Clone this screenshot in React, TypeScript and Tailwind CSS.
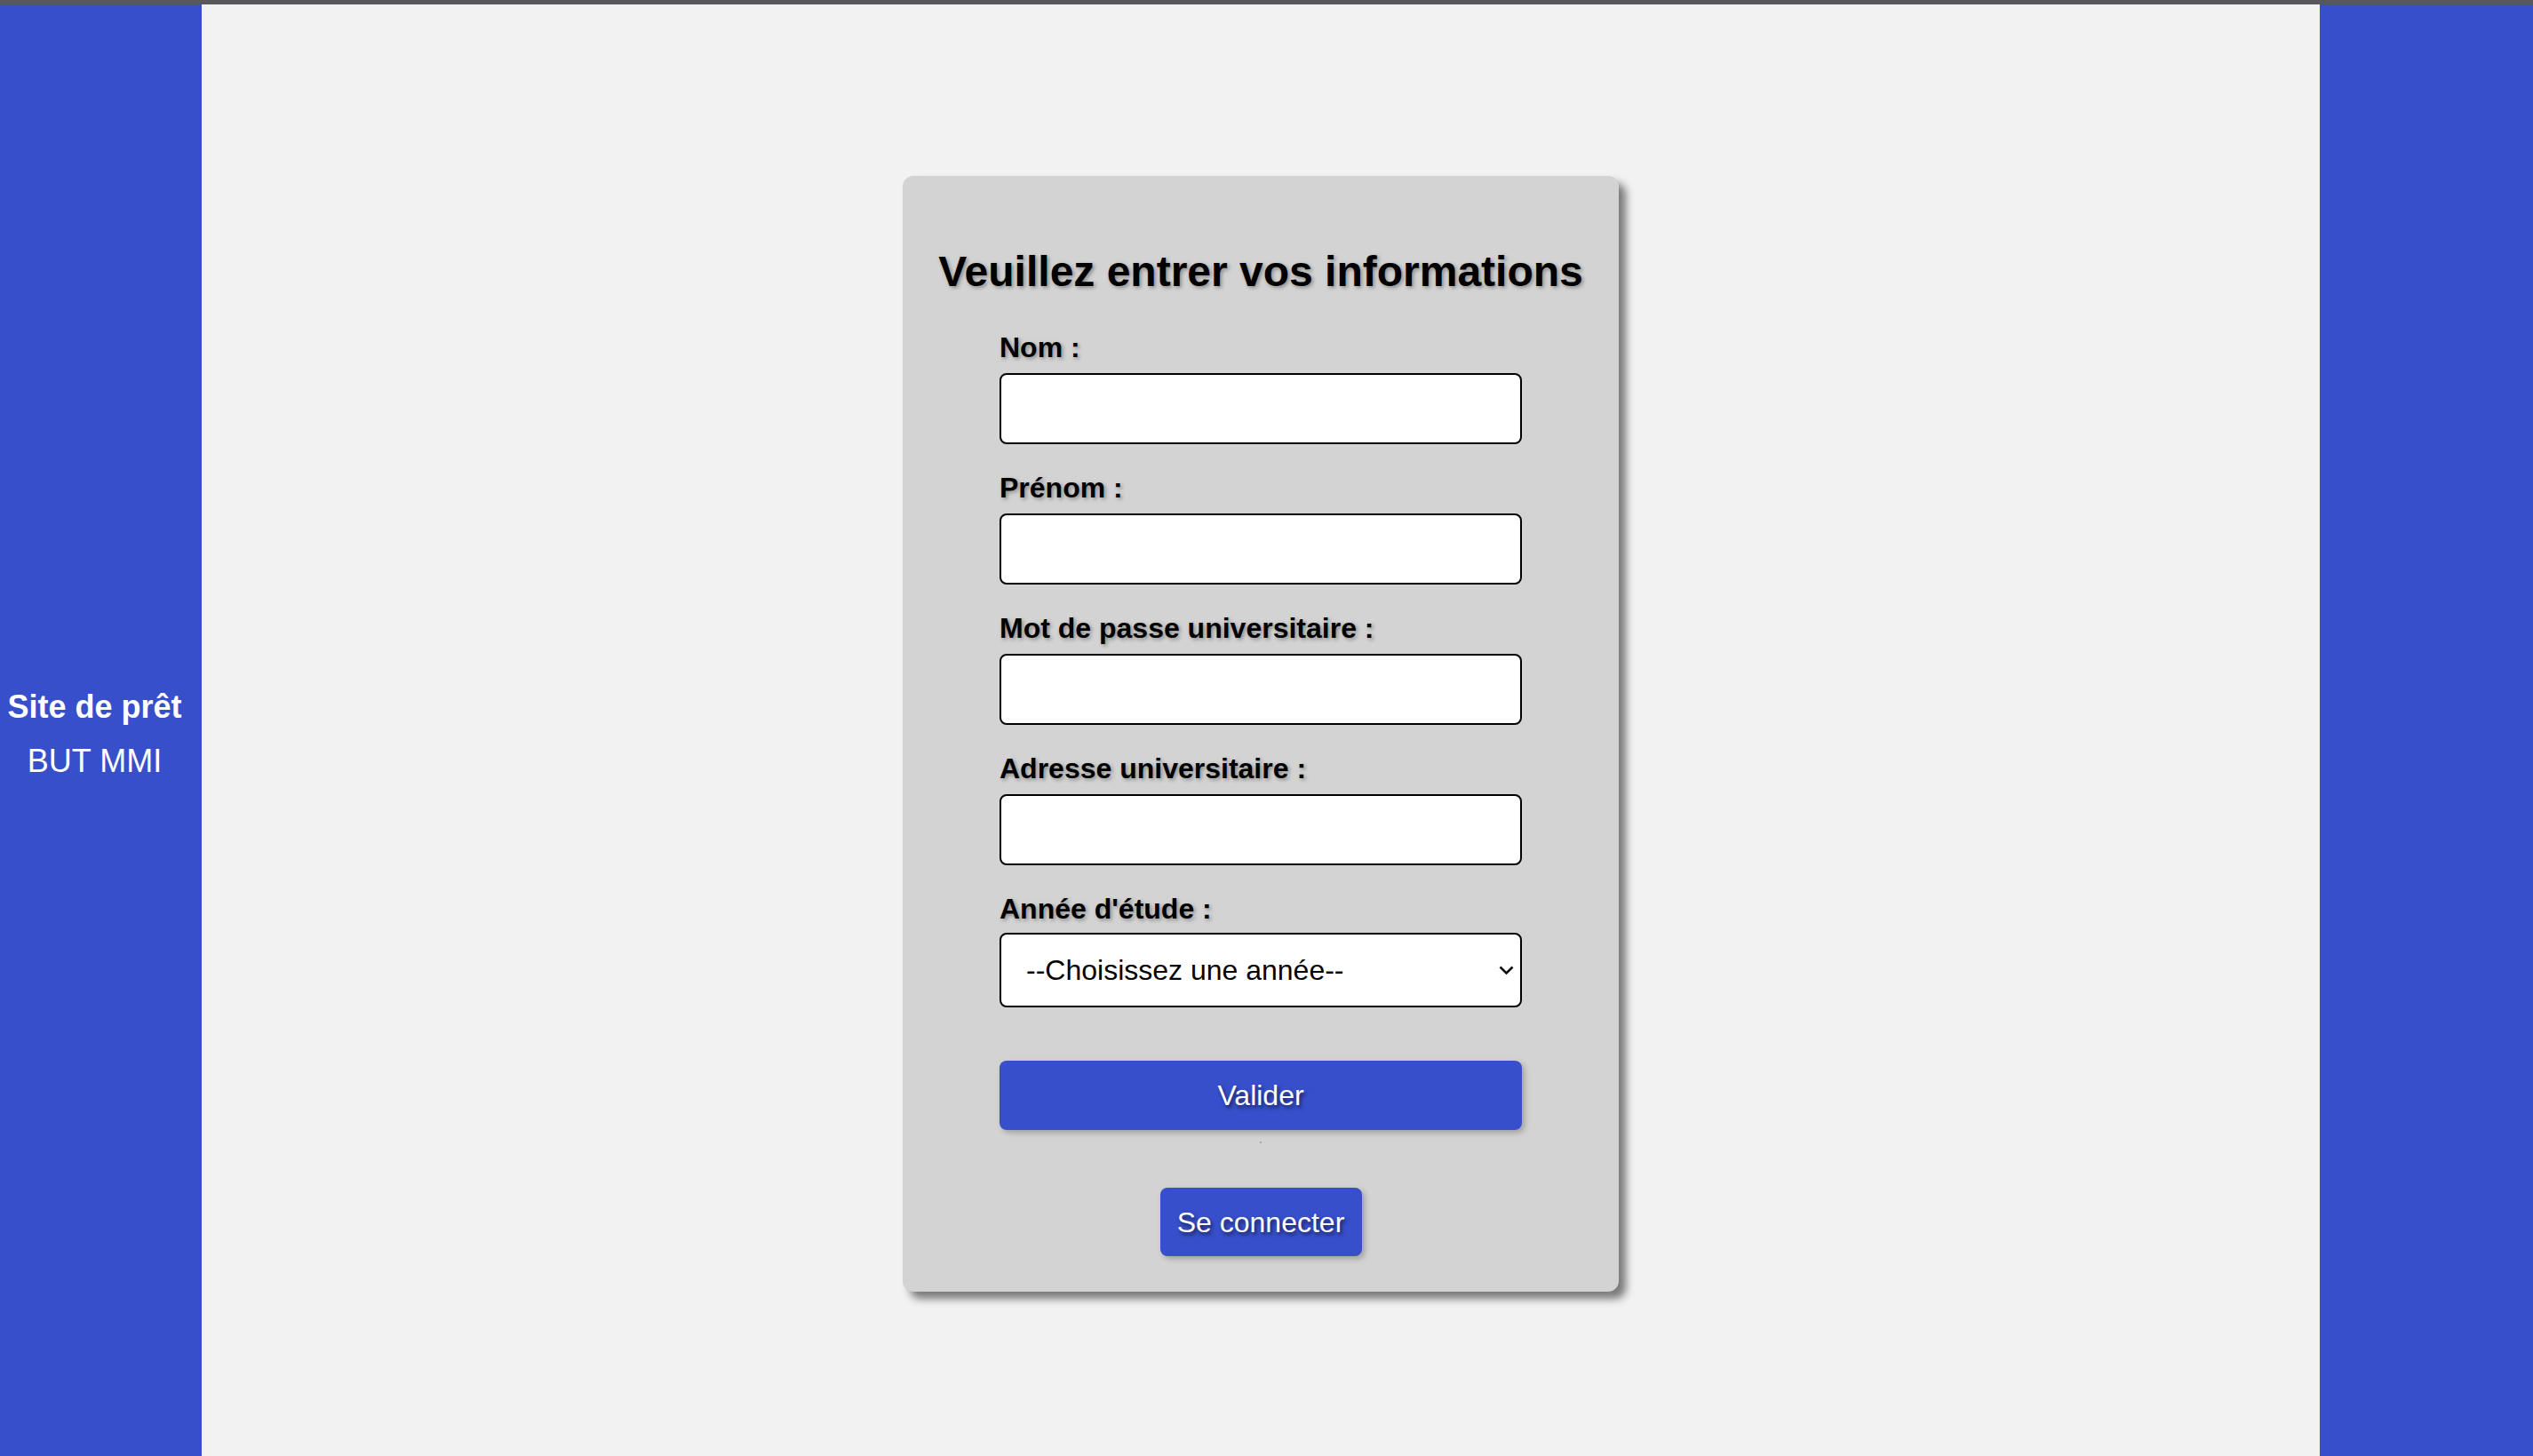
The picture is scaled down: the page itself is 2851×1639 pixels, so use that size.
import React from 'react';

const fields = [
    { id: 'nom', label: 'Nom :', type: 'text' },
    { id: 'prenom', label: 'Prénom :', type: 'text' },
    { id: 'mdp', label: 'Mot de passe universitaire :', type: 'password' },
    { id: 'adresse', label: 'Adresse universitaire :', type: 'email' },
];

export default function App() {
    return (
        <div className="flex h-screen flex-col overflow-hidden font-['Liberation_Sans',Arial,sans-serif]">
            <div className="h-[5px] w-full bg-[#58585c]" />
            <div className="flex flex-1">
                {/* barre gauche */}
                <aside className="flex w-[227px] shrink-0 flex-col items-center justify-center bg-[#384fcc] pr-[14px] pt-[8px] text-white">
                    <p className="text-[36px] font-bold leading-[41px]">Site de prêt</p>
                    <p className="mt-[20px] text-[36px] leading-[41px]">BUT MMI</p>
                </aside>

                <main className="flex flex-1 justify-center bg-[#f2f2f2] pt-[193px]">
                    <div className="h-fit w-[806px] rounded-[12px] bg-[#d3d3d3] px-[109px] pb-[40px] pt-[80px] shadow-[8px_8px_10px_rgba(0,0,0,0.5)]">
                        <h2 className="-mx-[109px] whitespace-nowrap text-center text-[48px] font-bold leading-[55px] text-black [text-shadow:2px_2px_4px_#8a8a8a]">
                            Veuillez entrer vos informations
                        </h2>

                        <form className="mt-[40px]" onSubmit={(e) => e.preventDefault()}>
                            {fields.map((f) => (
                                <div key={f.id} className="mb-[31px]">
                                    <label
                                        htmlFor={f.id}
                                        className="block text-[32px] font-bold leading-[37px] text-black [text-shadow:2px_2px_4px_#8a8a8a]"
                                    >
                                        {f.label}
                                    </label>
                                    <input
                                        id={f.id}
                                        type={f.type}
                                        className="mt-[10px] block h-[80px] w-full rounded-[8px] border-2 border-black bg-white px-[20px] text-[32px] outline-none"
                                    />
                                </div>
                            ))}

                            <label
                                htmlFor="annee"
                                className="block text-[32px] font-bold leading-[37px] text-black [text-shadow:2px_2px_4px_#8a8a8a]"
                            >
                                Année d'étude :
                            </label>
                            <div className="relative mt-[8px]">
                                <select
                                    id="annee"
                                    defaultValue=""
                                    className="block h-[84px] w-full appearance-none rounded-[8px] border-2 border-black bg-white pl-[28px] text-[32px] text-black outline-none"
                                >
                                    <option value="">--Choisissez une année--</option>
                                    <option value="1">BUT 1</option>
                                    <option value="2">BUT 2</option>
                                    <option value="3">BUT 3</option>
                                </select>
                                <svg
                                    className="pointer-events-none absolute right-[9px] top-[37px] h-[11px] w-[17px]"
                                    viewBox="0 0 17 11"
                                    fill="none"
                                    stroke="#111"
                                    strokeWidth="2.6"
                                >
                                    <path d="M1.5 1.5 L8.5 8.5 L15.5 1.5" />
                                </svg>
                            </div>

                            <button
                                type="submit"
                                className="mt-[60px] block h-[78px] w-full rounded-[8px] bg-[#384fcc] text-[32px] text-white shadow-[3px_3px_6px_rgba(0,0,0,0.25)] [text-shadow:2px_3px_4px_rgba(0,0,0,0.6)]"
                            >
                                Valider
                            </button>
                            <div className="mx-auto mt-[13px] h-[2px] w-[2px] rounded-full bg-[#9a9a9a]" />

                            <div className="mt-[50px] flex justify-center">
                                <button
                                    type="button"
                                    className="h-[77px] w-[227px] rounded-[8px] bg-[#384fcc] text-[32px] text-white shadow-[3px_3px_6px_rgba(0,0,0,0.25)] [text-shadow:2px_3px_4px_rgba(0,0,0,0.6)]"
                                >
                                    Se connecter
                                </button>
                            </div>
                        </form>
                    </div>
                </main>

                {/* barre droite */}
                <aside className="w-[240px] shrink-0 bg-[#384fcc]" />
            </div>
        </div>
    );
}
